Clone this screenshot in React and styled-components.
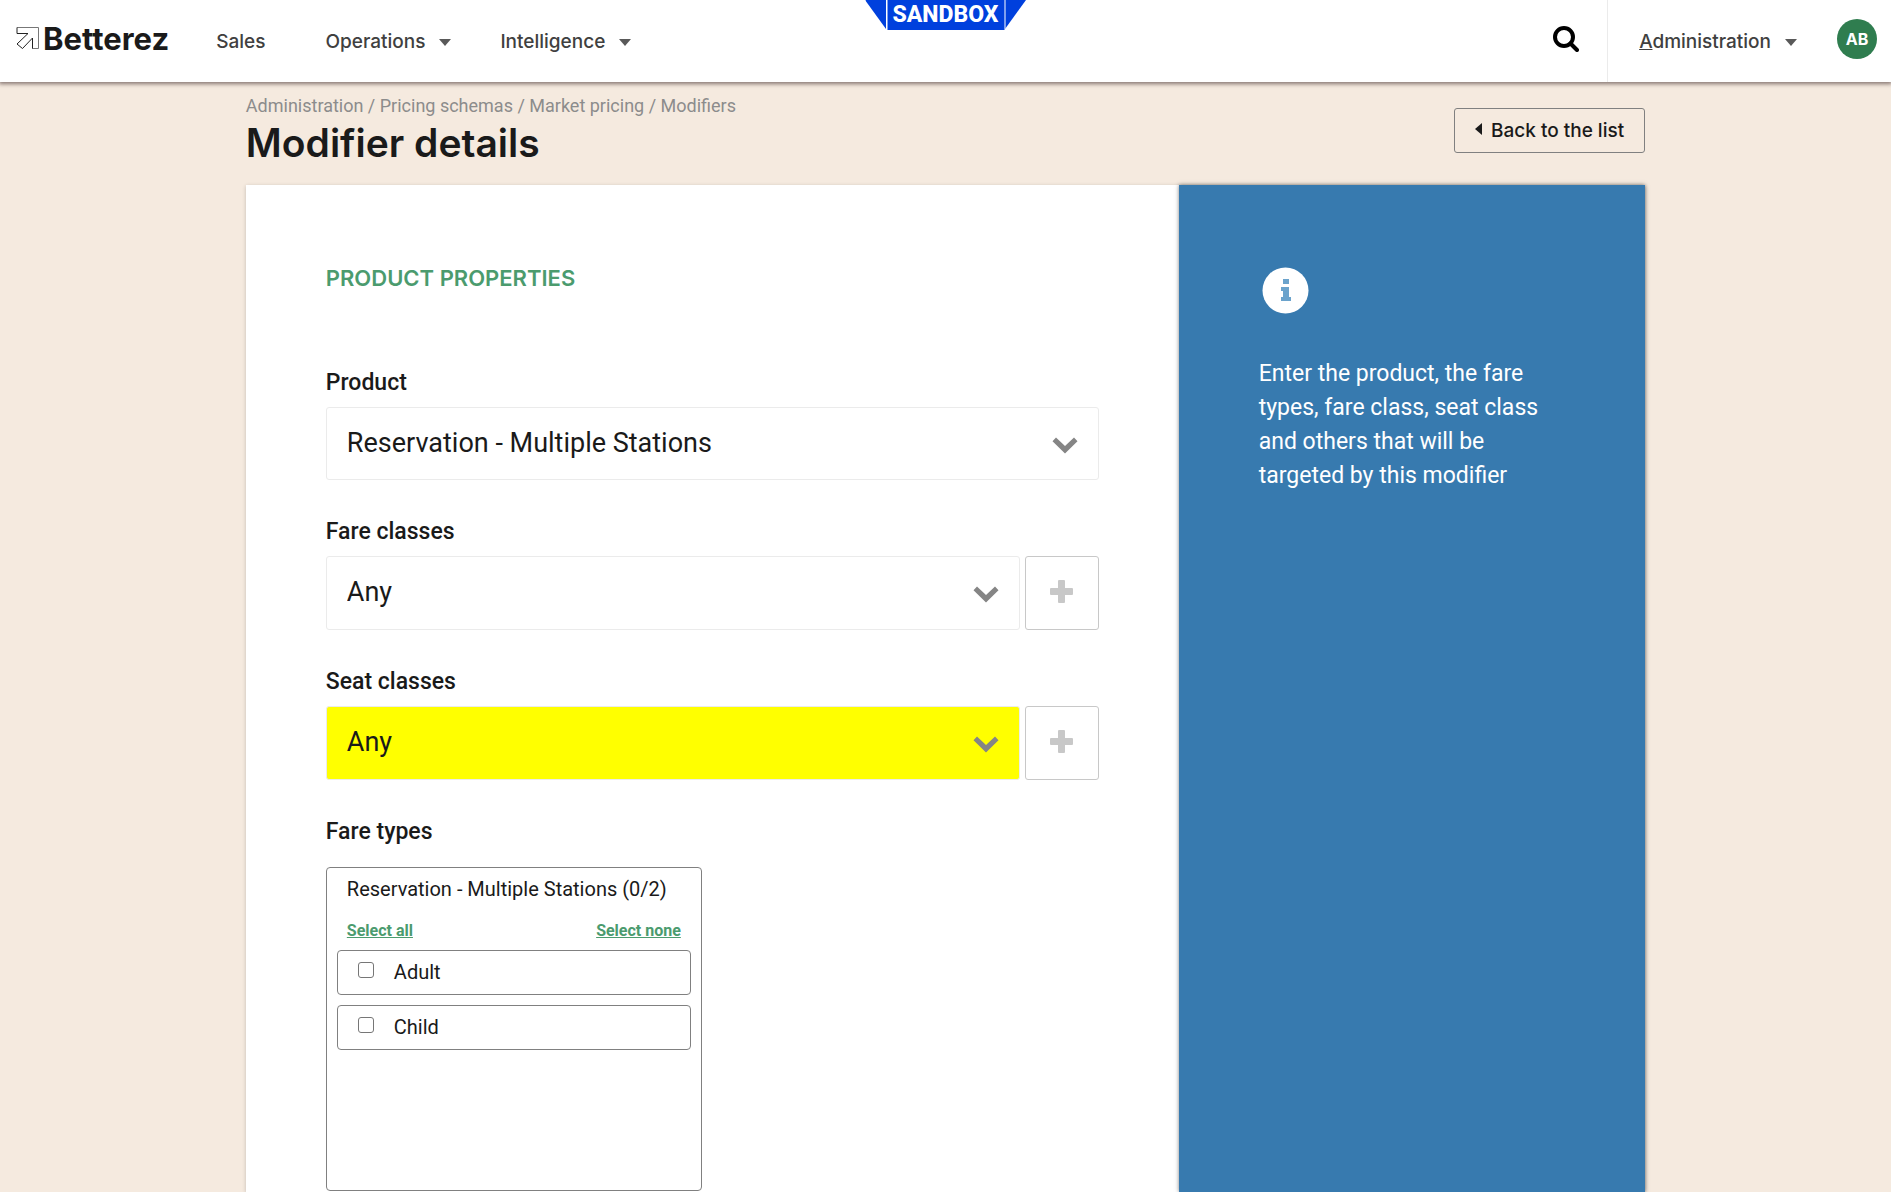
import React from 'react';
import styled, { createGlobalStyle } from "styled-components";

const GlobalStyle = createGlobalStyle`
    * {
        box-sizing: border-box;
    }

    body {
        margin: 0;
        background: #f5eadf;
        color: #1a1a1a;
        font-family: Roboto, "Liberation Sans", sans-serif;
    }
`

const Page = styled.div`
    display: flex;
    flex-direction: column;
    min-height: 100vh;
`

const Header = styled.header`
    position: relative;
    display: flex;
    height: 82px;
    background: #fff;
    box-shadow: 0 1px 4px 1px rgba(60, 40, 40, 0.6);
    font-family: Inter, "Liberation Sans", sans-serif;
`

const Logo = styled.a`
    display: flex;
    align-items: center;
    gap: 3px;
    padding: 0 47px 6px 16px;
    color: #1a1a1a;
    font-size: 31px;
    font-weight: 700;
    text-decoration: none;
`

const Nav = styled.nav`
    display: flex;
    align-items: center;
    gap: 49px;
    flex: 1;
`

const NavItem = styled.button`
    display: flex;
    align-items: center;
    gap: 14px;
    margin-right: ${props => props.$plain ? "11px" : "0"};
    padding: 2px 0 0;
    border: 0;
    background: none;
    color: #404040;
    font: 500 19px/24px Inter, "Liberation Sans", sans-serif;
    cursor: pointer;
`

const Caret = styled.span`
    border: 6px solid transparent;
    border-top: 7px solid #595959;
    border-bottom: 0;
`

const Ribbon = styled.div`
    position: absolute;
    top: 0;
    left: 50%;
    display: flex;
    gap: 1px;
    transform: translateX(-50%);
`

const RibbonText = styled.strong`
    width: 117px;
    background: #0040dd;
    color: #fff;
    font: 800 23px/30px Roboto, "Liberation Sans", sans-serif;
    text-align: center;
`

const RibbonEdge = styled.span`
    width: 21px;
    height: 29px;
    background: #0040dd;
    clip-path: ${props => props.$right ? "polygon(0 0, 100% 0, 0 100%)" : "polygon(0 0, 100% 0, 100% 100%)"};
`

const SearchButton = styled.button`
    padding: 0 28px 2px;
    border: 0;
    background: none;
    cursor: pointer;
`

const Account = styled.div`
    display: flex;
    align-items: center;
    gap: 40px;
    padding: 0 14px 0 31px;
    border-left: 1px solid #ebebeb;
`

const Avatar = styled.button`
    width: 40px;
    height: 40px;
    margin-bottom: 4px;
    padding: 0;
    border: 0;
    border-radius: 50%;
    background: #2f7d4f;
    color: #fff;
    font: 700 16px/40px Inter, "Liberation Sans", sans-serif;
`

const Content = styled.main`
    display: flex;
    flex-direction: column;
    flex: 1;
    width: 74%;
    margin: 0 auto;
`

const TitleBar = styled.div`
    display: flex;
    justify-content: space-between;
    align-items: flex-start;
    height: 103px;
    padding-top: 12px;
`

const Breadcrumbs = styled.nav`
    color: #8c8c8c;
    font-size: 18px;
    line-height: 24px;

    a {
        color: inherit;
        text-decoration: none;
    }
`

const Title = styled.h1`
    margin: 0;
    font: 600 39px/50px Inter, "Liberation Sans", sans-serif;
`

const BackLink = styled.a`
    display: flex;
    align-items: center;
    gap: 9px;
    height: 45px;
    margin-top: 14px;
    padding: 0 20px;
    border: 1px solid #808080;
    border-radius: 3px;
    color: #1a1a1a;
    font: 500 19px/24px Inter, "Liberation Sans", sans-serif;
    text-decoration: none;
`

const BackArrow = styled.span`
    margin-bottom: 4px;
    border: 6px solid transparent;
    border-right: 7px solid #1a1a1a;
    border-left: 0;
`

const Panels = styled.div`
    display: grid;
    grid-template-columns: 2fr 1fr;
    flex: 1;
    box-shadow: 0 1px 4px rgba(0, 0, 0, 0.2);
`

const Form = styled.form`
    padding: 78px 80px 0;
    background: #fff;
`

const SectionTitle = styled.h2`
    margin: 0 0 75px;
    color: #4b9b6e;
    font: 600 22px/30px Inter, "Liberation Sans", sans-serif;
`

const Field = styled.div`
    margin-bottom: 37px;
`

const Label = styled.label`
    display: block;
    padding-bottom: 9px;
    font-size: 23px;
    font-weight: 500;
    line-height: 30px;
`

const Controls = styled.div`
    display: flex;
    gap: 5px;
`

const SelectBox = styled.div`
    display: grid;
    flex: 1;
    align-items: center;

    > * {
        grid-area: 1 / 1;
    }

    svg {
        justify-self: end;
        margin: 3px 21px 0 0;
        pointer-events: none;
    }
`

const Select = styled.select`
    width: 100%;
    height: 100%;
    min-height: 73px;
    padding: 0 60px 2px 20px;
    border: 1px solid #ebebeb;
    border-radius: 3px;
    background: ${props => props.$highlight ? "#ffff00" : "#fff"};
    color: #1a1a1a;
    font: 400 27px Roboto, "Liberation Sans", sans-serif;
    appearance: none;
`

const AddButton = styled.button`
    display: flex;
    align-items: center;
    justify-content: center;
    width: 74px;
    height: 74px;
    padding: 0 0 4px;
    border: 1px solid #c8c8c8;
    border-radius: 3px;
    background: #fff;
`

const FareTypes = styled.fieldset`
    margin: 0;
    padding: 0;
    border: 0;
`

const Legend = styled.legend`
    padding: 0 0 20px;
    font-size: 23px;
    font-weight: 500;
    line-height: 30px;
`

const FareList = styled.div`
    width: 376px;
    height: 324px;
    padding: 0 10px;
    border: 1px solid #808080;
    border-radius: 4px;
`

const FareTitle = styled.div`
    padding: 9px 10px 10px;
    font-size: 20px;
    line-height: 24px;
`

const FareActions = styled.div`
    display: flex;
    justify-content: space-between;
    padding: 8px 10px 7px;
`

const TextButton = styled.button`
    padding: 0;
    border: 0;
    background: none;
    color: #4b9b6e;
    font: 700 16px/24px Roboto, "Liberation Sans", sans-serif;
    text-decoration: underline;
    cursor: pointer;
`

const FareOption = styled.label`
    display: flex;
    align-items: center;
    gap: 20px;
    height: 45px;
    margin-bottom: 10px;
    padding: 0 20px 2px;
    border: 1px solid #808080;
    border-radius: 4px;
    font-size: 20px;
`

const Checkbox = styled.input`
    width: 16px;
    height: 16px;
    margin: 0 0 4px;
    border: 1px solid #767676;
    border-radius: 3px;
    background: #fff;
    appearance: none;
`

const Info = styled.aside`
    padding: 82px 80px 0;
    background: #377aaf;
    box-shadow: 0 0 4px rgba(0, 0, 0, 0.5);
    color: #fff;

    svg {
        display: block;
        margin-left: 3px;
    }
`

const InfoText = styled.p`
    margin: 43px 0 0;
    font-size: 23px;
    line-height: 34px;
`

const crumbs = ["Administration", "Pricing schemas", "Market pricing", "Modifiers"];

const classFields = [
    { id: "fare-classes", label: "Fare classes" },
    { id: "seat-classes", label: "Seat classes", highlight: true },
];

const ChevronIcon = () => (
    <svg width="26" height="17" viewBox="0 0 26 17" fill="#858585">
        <path d="M4 0.500L13 9L22 0.500L25.500 4.200L13 16.500L0.500 4.200Z"/>
    </svg>
)

const PlusIcon = () => (
    <svg width="23" height="23" viewBox="0 0 23 23" fill="#c8c8c8">
        <rect x="8" y="0" width="7" height="23" rx="1"/>
        <rect x="0" y="8" width="23" height="7" rx="1"/>
    </svg>
)

const SelectField = ({ id, label, value, highlight, addable }) => (
    <Field>
        <Label htmlFor={id}>{label}</Label>
        <Controls>
            <SelectBox>
                <Select id={id} $highlight={highlight}>
                    <option>{value}</option>
                </Select>
                <ChevronIcon/>
            </SelectBox>
            {addable && (
                <AddButton type="button" aria-label={"Add " + label}>
                    <PlusIcon/>
                </AddButton>
            )}
        </Controls>
    </Field>
)

const App = () => {
    return (
        <Page>
            <GlobalStyle/>
            <Header>
                <Logo href="#">
                    <svg width="24" height="24" viewBox="0 0 24 24" fill="none" strokeWidth="1">
                        <path stroke="#777" d="M1 1.500H22.500V22.500H16.500V12"/>
                        <path stroke="#222" d="M16.500 22.500V12L6.500 22.500L1 18L12 7.500H1V1.500"/>
                    </svg>
                    Betterez
                </Logo>
                <Nav>
                    <NavItem $plain>Sales</NavItem>
                    <NavItem>Operations <Caret/></NavItem>
                    <NavItem>Intelligence <Caret/></NavItem>
                </Nav>
                <Ribbon>
                    <RibbonEdge/>
                    <RibbonText>SANDBOX</RibbonText>
                    <RibbonEdge $right/>
                </Ribbon>
                <SearchButton aria-label="Search">
                    <svg width="26" height="26" viewBox="0 0 26 26" fill="none" stroke="#000" strokeWidth="4">
                        <circle cx="11" cy="11" r="9"/>
                        <path strokeLinecap="round" d="M17.500 17.500L24 24"/>
                    </svg>
                </SearchButton>
                <Account>
                    <NavItem><span><u>A</u>dministration</span> <Caret/></NavItem>
                    <Avatar>AB</Avatar>
                </Account>
            </Header>
            <Content>
                <TitleBar>
                    <div>
                        <Breadcrumbs>
                            {crumbs.map((crumb, i) => (
                                <React.Fragment key={crumb}>
                                    {i > 0 && " / "}
                                    <a href="#">{crumb}</a>
                                </React.Fragment>
                            ))}
                        </Breadcrumbs>
                        <Title>Modifier details</Title>
                    </div>
                    <BackLink href="#"><BackArrow/>Back to the list</BackLink>
                </TitleBar>
                <Panels>
                    <Form>
                        <SectionTitle>PRODUCT PROPERTIES</SectionTitle>
                        <SelectField id="product" label="Product" value="Reservation - Multiple Stations"/>
                        {classFields.map((field) => (
                            <SelectField key={field.id} {...field} value="Any" addable/>
                        ))}
                        <FareTypes>
                            <Legend>Fare types</Legend>
                            <FareList>
                                <FareTitle>Reservation - Multiple Stations (0/2)</FareTitle>
                                <FareActions>
                                    <TextButton type="button">Select all</TextButton>
                                    <TextButton type="button">Select none</TextButton>
                                </FareActions>
                                <FareOption><Checkbox type="checkbox"/>Adult</FareOption>
                                <FareOption><Checkbox type="checkbox"/>Child</FareOption>
                            </FareList>
                        </FareTypes>
                    </Form>
                    <Info>
                        <svg width="47" height="47" viewBox="0 0 47 47">
                            <circle cx="23.500" cy="23.500" r="23" fill="#fff"/>
                            <path fill="#6ba3cc" d="M21 12h6v5h-6zM19 20h8v10h2v4H19v-4h2v-6h-2z"/>
                        </svg>
                        <InfoText>
                            Enter the product, the fare types, fare class, seat class and others that will be targeted by this modifier
                        </InfoText>
                    </Info>
                </Panels>
            </Content>
        </Page>
    );
};

export default App;
